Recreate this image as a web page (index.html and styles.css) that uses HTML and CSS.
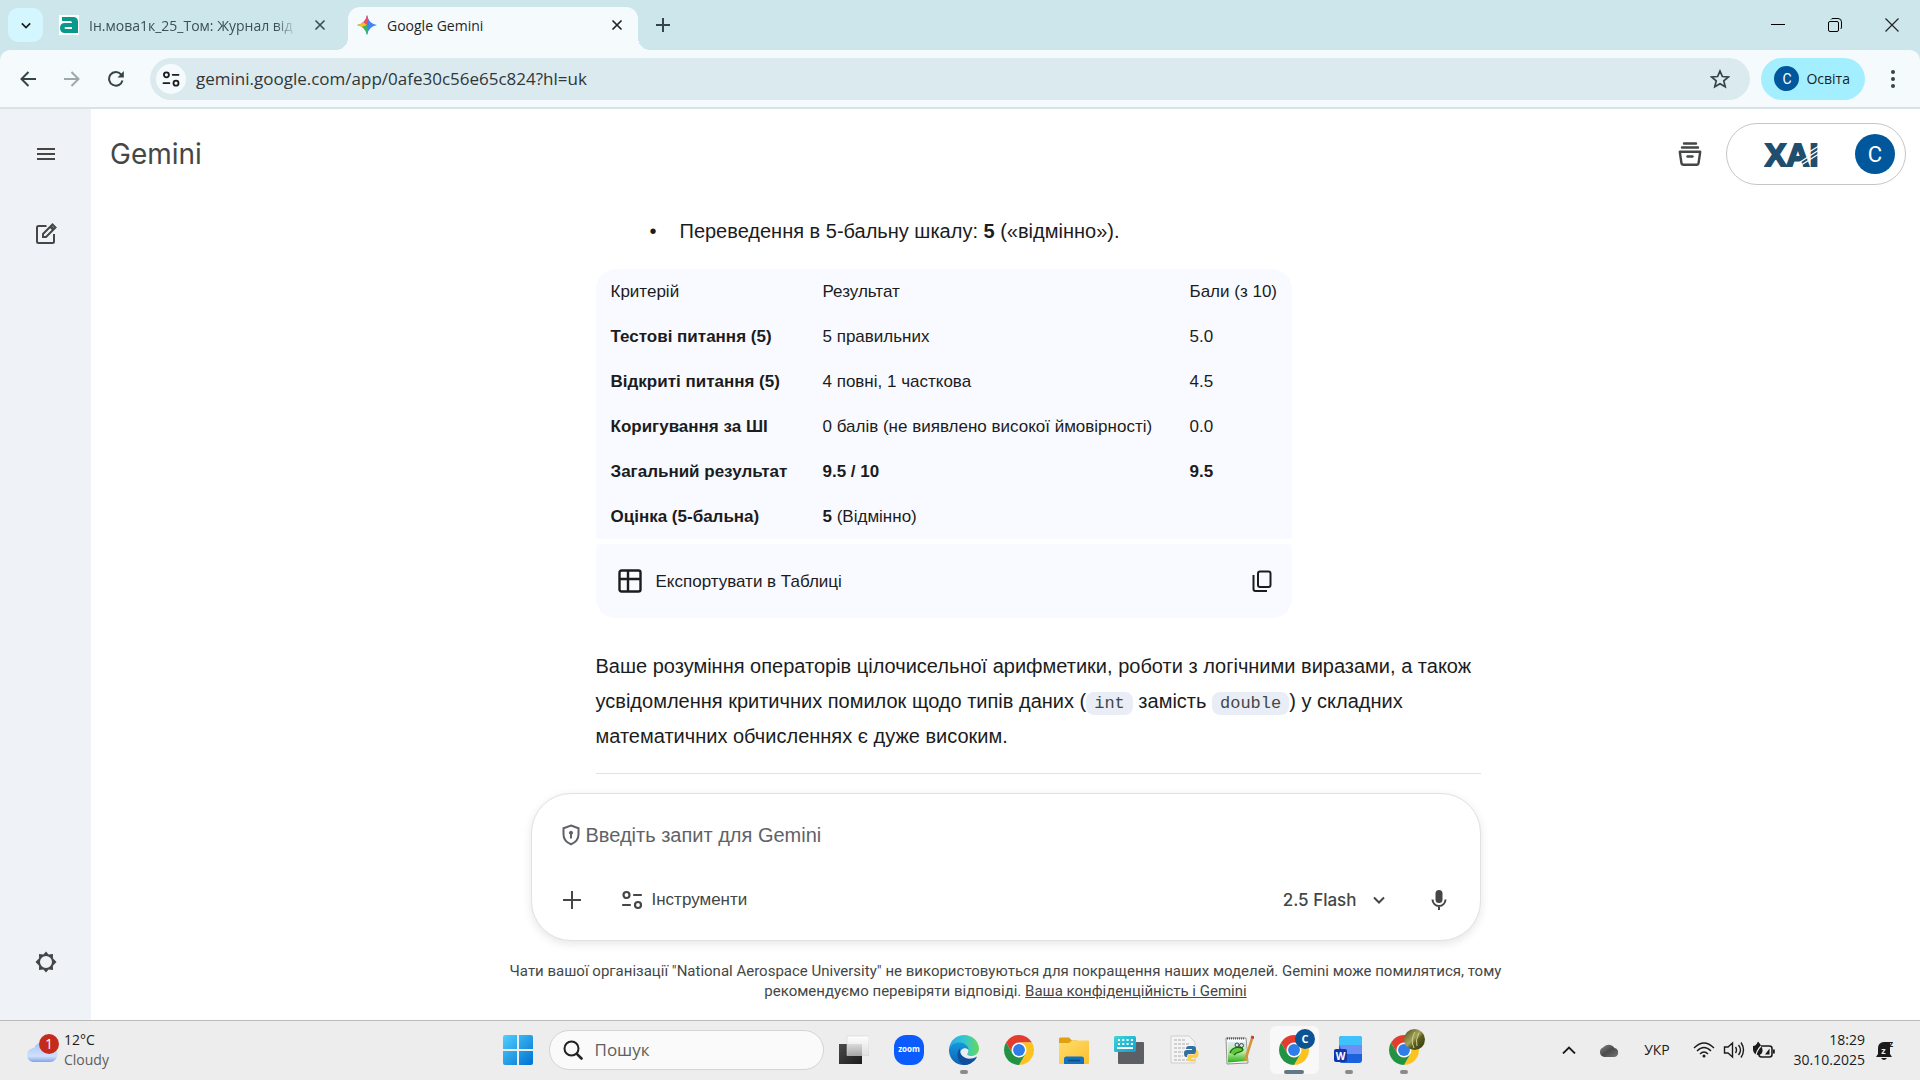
FILE: index.html
```
<!DOCTYPE html>
<html lang="uk">
<head>
<meta charset="utf-8">
<meta name="viewport" content="width=device-width, initial-scale=1">
<title>Google Gemini</title>
<link rel="stylesheet" href="styles.css">
</head>
<body>
<svg class="defs" aria-hidden="true">
  <defs>
    <linearGradient id="win" x1="0" y1="0" x2="1" y2="1"><stop offset="0" stop-color="#4fd0ff"/><stop offset="1" stop-color="#0070d0"/></linearGradient>
    <linearGradient id="folder" x1="0" y1="0" x2="1" y2="1"><stop offset="0" stop-color="#ffdc6b"/><stop offset="1" stop-color="#fbc02f"/></linearGradient>
    <linearGradient id="edgeTop" x1="0" y1="0" x2="1" y2="0"><stop offset="0" stop-color="#2aa8e8"/><stop offset=".5" stop-color="#33c6d2"/><stop offset="1" stop-color="#66d95a"/></linearGradient>
    <linearGradient id="edgeMid" x1="0" y1="0" x2="0" y2="1"><stop offset="0" stop-color="#1798dc"/><stop offset="1" stop-color="#0b62b8"/></linearGradient>
    <linearGradient id="cloud" x1="0" y1="0" x2="0" y2="1"><stop offset="0" stop-color="#a9c4f4"/><stop offset=".7" stop-color="#cfe0fb"/><stop offset="1" stop-color="#7ea4e8"/></linearGradient>
    <linearGradient id="dark" x1="0" y1="0" x2="1" y2="1"><stop offset="0" stop-color="#4a4a4a"/><stop offset="1" stop-color="#1c1c1c"/></linearGradient>
    <linearGradient id="glass" x1="0" y1="0" x2="0" y2="1"><stop offset="0" stop-color="#fff"/><stop offset="1" stop-color="#ddd" stop-opacity=".7"/></linearGradient>
    <linearGradient id="keys" x1="0" y1="0" x2="1" y2="1"><stop offset="0" stop-color="#3fd6d6"/><stop offset="1" stop-color="#0f9fcf"/></linearGradient>
    <linearGradient id="photo" x1="0" y1="0" x2="1" y2="1"><stop offset="0" stop-color="#4b4c15"/><stop offset=".45" stop-color="#a3a45a"/><stop offset=".6" stop-color="#5b5e1c"/><stop offset="1" stop-color="#2f3210"/></linearGradient>
    <linearGradient id="onedrive" x1="0" y1="0" x2="1" y2="1"><stop offset="0" stop-color="#888"/><stop offset=".5" stop-color="#4a4a4a"/><stop offset="1" stop-color="#777"/></linearGradient>
    <linearGradient id="meadow" x1="0" y1="0" x2="0" y2="1"><stop offset="0" stop-color="#d8ecf6"/><stop offset=".5" stop-color="#bfe7a0"/><stop offset="1" stop-color="#22b014"/></linearGradient>
    <symbol id="chrome" viewBox="0 0 48 48">
      <circle cx="24" cy="24" r="12" fill="#fff"/>
      <path fill="#e33b2e" d="M24 12h20.78A24 24 0 0 0 3.22 12L13.61 30A12 12 0 0 1 24 12Z"/>
      <path fill="#fcc31e" d="M34.39 30 24 48A24 24 0 0 0 44.78 12H24A12 12 0 0 1 34.39 30Z"/>
      <path fill="#229342" d="M13.61 30 3.22 12A24 24 0 0 0 24 48L34.39 30A12 12 0 0 1 13.61 30Z"/>
      <circle cx="24" cy="24" r="9.5" fill="#2f7de9"/>
    </symbol>
    <symbol id="tune" viewBox="0 0 24 24">
      <g fill="none" stroke="currentColor" stroke-width="2.200" stroke-linecap="round"><circle cx="6.5" cy="7" r="3"/><path d="M14 7h7M3 17h7"/><circle cx="18" cy="17" r="3"/></g>
    </symbol>
    <symbol id="cross" viewBox="0 0 12 12"><path d="M1.500 1.500l9 9M10.500 1.500l-9 9" stroke="currentColor" stroke-width="1.700" fill="none"/></symbol>
    <symbol id="chev" viewBox="0 0 12 8"><path d="M1 1.500l5 5 5-5" stroke="currentColor" stroke-width="2" fill="none"/></symbol>
  </defs>
</svg>

<header class="browser">
  <div class="tabstrip">
    <button class="tab-search" aria-label="Пошук вкладок"><svg width="10" height="7"><use href="#chev"/></svg></button>
    <div class="tab">
      <svg width="20" height="20" viewBox="0 0 20 20" aria-hidden="true"><path fill="#fff" d="M0 0h20v20H0z"/><path fill="#07998a" d="M3 2h11q5 0 5 5v11H6q-5 0-5-5t5-5h7V7.500q0-1.500-2-1.500H3zM7 12q-1.500 0-1.500 1T7 14h6v-2z"/></svg>
      <span class="tab-title faded">Ін.мова1к_25_Том: Журнал від</span>
      <button class="tab-close" aria-label="Закрити вкладку"><svg width="12" height="12"><use href="#cross"/></svg></button>
    </div>
    <div class="tab active">
      <svg width="20" height="20" viewBox="0 0 20 20" aria-hidden="true"><defs><clipPath id="spark"><path d="M10 0q1.500 8.500 10 10-8.500 1.500-10 10Q8.500 11.500 0 10 8.500 8.500 10 0Z"/></clipPath></defs><g clip-path="url(#spark)"><path fill="#3f86f5" d="M0 0h20v20H0z"/><path fill="#ee4d5e" d="M4 0h9l-3 10-5-2z"/><path fill="#fbbf1c" d="M0 5l6 2 4 3-3 3-7-1z"/><path fill="#35b566" d="M5 12l5-2 2 10H6z"/></g></svg>
      <span class="tab-title">Google Gemini</span>
      <button class="tab-close" aria-label="Закрити вкладку"><svg width="12" height="12"><use href="#cross"/></svg></button>
    </div>
    <button class="new-tab" aria-label="Нова вкладка"><svg width="14" height="14" viewBox="0 0 14 14"><path d="M7 0v14M0 7h14" stroke="currentColor" stroke-width="2"/></svg></button>
    <div class="window-controls">
      <button aria-label="Згорнути"><svg width="14" height="14" viewBox="0 0 14 14"><path d="M0 6.500h14" stroke="#000"/></svg></button>
      <button aria-label="Відновити"><svg width="14" height="14" viewBox="0 0 14 14" fill="none" stroke="#000"><rect x=".5" y="3.500" width="10" height="10" rx="1.500"/><path d="M3 1.500Q3.500.5 5 .5h5q3.500 0 3.500 3.500v5q0 1.500-1 2"/></svg></button>
      <button aria-label="Закрити"><svg width="14" height="14" viewBox="0 0 14 14"><path d="M.5.5l13 13M13.500.5l-13 13" stroke="#222" stroke-width="1.200"/></svg></button>
    </div>
  </div>
  <div class="toolbar">
    <nav class="history">
      <button aria-label="Назад"><svg width="16" height="16" viewBox="0 0 16 16"><path d="M16 8H2M8.500 1 1.500 8l7 7" fill="none" stroke="#344549" stroke-width="2"/></svg></button>
      <button aria-label="Вперед" disabled><svg width="16" height="16" viewBox="0 0 16 16"><path d="M0 8h14M7.500 1l7 7-7 7" fill="none" stroke="#9da8ab" stroke-width="2"/></svg></button>
      <button aria-label="Оновити"><svg width="16" height="16" viewBox="0 0 16 16"><path d="M14.500 9.500A6.800 6.800 0 1 1 13 3.300L15 5.500" fill="none" stroke="#344549" stroke-width="2"/><path d="M15.800 0v6.500H9.500z" fill="#344549"/></svg></button>
    </nav>
    <div class="omnibox">
      <button class="site-info" aria-label="Відомості про сайт"><svg width="20" height="20"><use href="#tune"/></svg></button>
      <input class="url" type="text" aria-label="Адреса" value="gemini.google.com/app/0afe30c56e65c824?hl=uk">
      <button class="star" aria-label="Додати закладку"><svg width="20" height="20" viewBox="0 0 20 20"><path d="M10 2l2.400 5.500 6 .5-4.600 3.900 1.400 5.900L10 14.700l-5.200 3.100 1.400-5.900L1.600 8l6-.5z" fill="none" stroke="#344549" stroke-width="1.700"/></svg></button>
    </div>
    <button class="profile"><span class="avatar small">C</span>Освіта</button>
    <button class="menu" aria-label="Меню"><svg width="4" height="18" viewBox="0 0 4 18" fill="#344549"><circle cx="2" cy="2" r="2"/><circle cx="2" cy="9" r="2"/><circle cx="2" cy="16" r="2"/></svg></button>
  </div>
</header>

<div class="app">
  <aside class="sidebar">
    <button aria-label="Головне меню"><svg width="18" height="14" viewBox="0 0 18 14"><path d="M0 2h18M0 7h18M0 12h18" stroke="#444746" stroke-width="2"/></svg></button>
    <button aria-label="Новий чат"><svg width="22" height="22" viewBox="0 0 22 22" fill="none" stroke="#444746" stroke-width="2"><path d="M11.500 3H3.500Q2 3 2 4.500v14Q2 20 3.500 20h14q1.500 0 1.500-1.500V11"/><path d="M8 14v-3L17.500 1.500l3 3L11 14z"/><path d="M15.500 3.500l3 3" stroke-width="3"/></svg></button>
    <button class="settings" aria-label="Налаштування"><svg width="22" height="22" viewBox="0 0 22 22" fill="#444746"><path fill-rule="evenodd" d="M11 .5l2.600 3 4.400-.5-.1 4.300 3.600 3.700-3.600 3.700.1 4.300-4.400-.5-2.600 3-2.600-3-4.400.5.100-4.300L.5 11l3.600-3.700L4 3l4.400.5zM11 5a6 6 0 1 0 0 12 6 6 0 1 0 0-12z"/></svg></button>
  </aside>

  <main class="content">
    <header class="top">
      <h1>Gemini</h1>
      <button class="archive" aria-label="Архів"><svg width="24" height="24" viewBox="0 0 24 24" fill="none" stroke="#444746" stroke-width="2.400" stroke-linecap="round"><path d="M6 1.500h12M4 5.500h16"/><path d="M1.800 9.800h20.400l-1.600 11q-.3 2-2 2H5.400q-1.700 0-2-2z" stroke-linejoin="round"/><path d="M9.500 14.500h5"/></svg></button>
      <button class="account" aria-label="Обліковий запис">
        <svg class="org" width="60" height="30" viewBox="0 0 60 30"><text x="1" y="27">XAI</text><path d="M30 27 58 9M34 28 58 13M42 15 58 5" stroke="#fff" stroke-width="1.300"/></svg>
        <span class="avatar">C</span>
      </button>
    </header>

    <section class="chat">
      <ul class="points"><li>Переведення в 5-бальну шкалу: <b>5</b> («відмінно»).</li></ul>
      <div class="table-card">
        <table>
          <thead><tr><th scope="col">Критерій</th><th scope="col">Результат</th><th scope="col">Бали (з 10)</th></tr></thead>
          <tbody>
            <tr><td><b>Тестові питання (5)</b></td><td>5 правильних</td><td>5.0</td></tr>
            <tr><td><b>Відкриті питання (5)</b></td><td>4 повні, 1 часткова</td><td>4.5</td></tr>
            <tr><td><b>Коригування за ШІ</b></td><td>0 балів (не виявлено високої ймовірності)</td><td>0.0</td></tr>
            <tr><td><b>Загальний результат</b></td><td><b>9.5 / 10</b></td><td><b>9.5</b></td></tr>
            <tr><td><b>Оцінка (5-бальна)</b></td><td><b>5</b> (Відмінно)</td><td></td></tr>
          </tbody>
        </table>
        <div class="table-footer">
          <button class="export"><svg width="24" height="24" viewBox="0 0 24 24" fill="none" stroke="#1b1c1d" stroke-width="2.400"><rect x="1.500" y="1.500" width="21" height="21" rx="2"/><path d="M1.500 10h21M10 1.500v21"/></svg>Експортувати в Таблиці</button>
          <button class="copy" aria-label="Копіювати"><svg width="20" height="22" viewBox="0 0 20 22" fill="none" stroke="#1b1c1d" stroke-width="2"><rect x="6" y="1.500" width="12.500" height="15.500" rx="2"/><path d="M1.500 5v14q0 2 2 2H15"/></svg></button>
        </div>
      </div>
      <p>Ваше розуміння операторів цілочисельної арифметики, роботи з логічними виразами, а також<br>усвідомлення критичних помилок щодо типів даних (<code>int</code> замість <code>double</code>) у складних<br>математичних обчисленнях є дуже високим.</p>
      <hr>
    </section>

    <form class="prompt">
      <div class="prompt-text">
        <svg width="20" height="22" viewBox="0 0 20 22" fill="none" stroke="#5f6368" stroke-width="2"><path d="M10 1.500l7.500 2.800v6q0 7-7.500 10-7.500-3-7.500-10v-6z"/><circle cx="10" cy="8.800" r="1.600" fill="#5f6368" stroke-width="1"/><path d="M10 9v5.500"/></svg>
        <input type="text" aria-label="Запит" placeholder="Введіть запит для Gemini">
      </div>
      <div class="prompt-tools">
        <button type="button" class="round" aria-label="Додати файли"><svg width="18" height="18" viewBox="0 0 18 18"><path d="M9 0v18M0 9h18" stroke="#444746" stroke-width="2"/></svg></button>
        <button type="button" class="tools"><svg width="24" height="24"><use href="#tune"/></svg>Інструменти</button>
        <button type="button" class="model">2.5 Flash<svg width="12" height="8"><use href="#chev"/></svg></button>
        <button type="button" class="round" aria-label="Мікрофон"><svg width="16" height="20" viewBox="0 0 16 20"><rect x="4.500" y="0" width="7" height="13" rx="3.500" fill="#444746"/><path d="M1.500 9.500a6.500 6.500 0 0 0 13 0M8 16v4" fill="none" stroke="#444746" stroke-width="2"/></svg></button>
      </div>
    </form>
    <p class="disclaimer">Чати вашої організації "National Aerospace University" не використовуються для покращення наших моделей. Gemini може помилятися, тому<br>рекомендуємо перевіряти відповіді. <a href="#">Ваша конфіденційність і Gemini</a></p>
  </main>
</div>

<footer class="taskbar">
  <button class="weather">
    <svg width="34" height="32" viewBox="0 0 34 32"><path d="M8 28a7 7 0 0 1-1-13.600 3 3 0 0 1 2-.4A9 9 0 0 1 25 13a7.500 7.500 0 0 1 0 15z" fill="url(#cloud)"/><circle cx="24" cy="10" r="10" fill="#c42b1c"/><text x="24" y="15">1</text></svg>
    <span class="weather-text"><span>12°C</span><span class="muted">Cloudy</span></span>
  </button>
  <nav class="apps">
    <button class="task" aria-label="Пуск"><svg width="30" height="30" viewBox="0 0 30 30"><path fill="url(#win)" d="M2 0h12v14H0V2q0-2 2-2zM16 0h12q2 0 2 2v12H16zM0 16h14v14H2q-2 0-2-2zM16 16h14v12q0 2-2 2H16z"/></svg></button>
    <label class="search"><svg width="20" height="20" viewBox="0 0 20 20" fill="none" stroke="#222" stroke-linecap="round"><circle cx="8.500" cy="8.500" r="7" stroke-width="2"/><path d="M13.800 13.800l4.700 4.700" stroke-width="2.600"/></svg><input type="text" placeholder="Пошук" aria-label="Пошук"></label>
    <button class="task" aria-label="Подання завдань"><svg width="30" height="30" viewBox="0 0 30 30"><path fill="url(#dark)" d="M0 9h23v20H0z"/><path fill="url(#glass)" stroke="#d5d5d5" stroke-width=".6" d="M8 1h22v19.500H8z"/></svg></button>
    <button class="task" aria-label="Zoom"><svg width="30" height="30" viewBox="0 0 30 30"><rect width="30" height="30" rx="12" fill="#0b5cff"/><text class="zoom-word" x="15" y="17">zoom</text></svg></button>
    <button class="task running" aria-label="Edge"><svg width="30" height="30" viewBox="0 0 30 30"><path fill="url(#edgeTop)" d="M0 14C1 5 8 0 15 0c9 0 15 7 15 13.500 0 5-4 7.500-7.500 7.500-3 0-5-1-4-2.500C21 15 18 9 11 9 6 9 2 11 0 14z"/><path fill="url(#edgeMid)" d="M0 14C2 9 7 7 11 7.500c5 .5 9 4 8.500 7.500-3-4-9-1-8.500 4 .5 6 6 10 12 8.500C20 29.500 17 30 15 30 6 30-.5 23 0 14z"/><path fill="#0f4f9e" d="M11 13.500c-1 9 9 13 17 8C26 27 20 30 15 30 9 28 6 18 11 13.500z"/></svg></button>
    <button class="task" aria-label="Chrome"><svg width="30" height="30"><use href="#chrome"/></svg></button>
    <button class="task" aria-label="Провідник"><svg width="30" height="30" viewBox="0 0 30 30"><path fill="#e0a010" d="M0 4q0-1.500 1.500-1.500H10l3 3h5V10H0z"/><path fill="url(#folder)" d="M0 8h10l3-2.500h16q1 0 1 1V28q0 1-1 1H1q-1 0-1-1z"/><path fill="#0f72c4" d="M5 29v-5q0-2.500 2.500-2.500h15Q25 21.500 25 24v5z"/><path d="M9 25.500h12" stroke="#0a4a86" stroke-width="1.500"/></svg></button>
    <button class="task" aria-label="Екранна клавіатура"><svg width="30" height="30" viewBox="0 0 30 30"><rect x="4" y="7" width="26" height="22" rx="1" fill="#5c5f63"/><rect width="22" height="16" y="1" rx="1.500" fill="url(#keys)"/><path d="M4 5h15M4 9h15" stroke="#fff" stroke-width="2" stroke-dasharray="2 2.300"/><path d="M3 13h16" stroke="#fff" stroke-width="2"/></svg></button>
    <button class="task" aria-label="Python"><svg width="30" height="30" viewBox="0 0 30 30"><path fill="#f4f4f4" stroke="#cfcfcf" d="M2 1h18l6 6v21H2z"/><path d="M5 5h12M5 9h16M5 13h12M5 17h9M5 21h9M5 25h14" stroke="#c4c4c4" stroke-width="1.500" stroke-dasharray="3 1"/><path fill="#34709f" d="M20 11h4q3 0 3 3v3q0 2-2 2h-5q-2 0-2 3h-1q-2 0-2-4 0-3 3-3h5v-1h-6q0-3 3-3z"/><path fill="#fcd04c" d="M27 15q2.500 0 2.500 4t-3 4h-4v1h4q0 2.500-3 2.500h-2q-3 0-3-3v-2q0-2 2-2h4q2.500 0 2.500-4.500z"/></svg></button>
    <button class="task" aria-label="Notepad++"><svg width="30" height="30" viewBox="0 0 30 30"><path fill="#fafafa" stroke="#777" stroke-width=".8" d="M2 3h20l2 25-21 1z"/><path fill="url(#meadow)" d="M3.500 7h18.500l1 19-19 1.500z"/><path d="M3 3.500h18" stroke="#555" stroke-width="2" stroke-dasharray="1 1"/><path d="M6 18c2-7 12-7 13-3-2 3-6 1-9 5" fill="#5cc83a" stroke="#166b12" stroke-width="1.300"/><circle cx="13" cy="10" r="2" fill="none" stroke="#444"/><circle cx="17.500" cy="10.500" r="2" fill="none" stroke="#444"/><path d="M28.500 2 21 26" stroke="#d8933a" stroke-width="2.600"/><path d="M29 1l-.8 2.500" stroke="#c03c3c" stroke-width="3"/></svg></button>
    <button class="task running current" aria-label="Chrome, Освіта"><svg width="42" height="42" viewBox="-6 0 42 42"><svg x="0" y="6" width="30" height="30"><use href="#chrome"/></svg><circle cx="26" cy="10" r="10" fill="#0b5394"/><text class="badge-letter" x="26" y="14">C</text></svg></button>
    <button class="task running" aria-label="Word"><svg width="30" height="30" viewBox="0 0 30 30"><rect x="5" y="1" width="23" height="27" rx="3" fill="#1b62dd"/><path fill="#3fc1fb" d="M8 1h17q3 0 3 3v6H5V4q0-3 3-3z"/><path fill="#6d8ff5" d="M5 10h23v9H10z"/><rect y="14" width="13" height="13" rx="2" fill="#1236a8"/><text class="word-letter" x="6.500" y="24.500">W</text></svg></button>
    <button class="task running" aria-label="Chrome"><svg width="42" height="42" viewBox="-6 0 42 42"><svg x="0" y="6" width="30" height="30"><use href="#chrome"/></svg><circle cx="25.500" cy="10.500" r="10.500" fill="url(#photo)"/><path d="M26 3q-5 8-1 16M30 4q-4 7-2 13" stroke="#cfcf90" fill="none"/></svg></button>
  </nav>
  <div class="tray">
    <button class="tray-item" aria-label="Приховані піктограми"><svg width="14" height="8" viewBox="0 0 14 8"><path d="M1 7.500l6-6 6 6" stroke="#1b1b1b" stroke-width="1.800" fill="none"/></svg></button>
    <button class="tray-item" aria-label="OneDrive"><svg width="20" height="14" viewBox="0 0 20 14"><path fill="url(#onedrive)" d="M5 14a5 5 0 0 1-1-9.500A7 7 0 0 1 15.500 5 4.600 4.600 0 0 1 15.500 14z"/></svg></button>
    <button class="lang">УКР</button>
    <button class="status" aria-label="Мережа, звук, батарея">
      <svg width="22" height="16" viewBox="0 0 22 16" fill="none" stroke="#1b1b1b" stroke-width="1.400"><path d="M1 6Q11-4 21 6M4 9q7-7 14 0M7 12q4-4 8 0"/><circle cx="11" cy="14" r="1.500" fill="#1b1b1b" stroke="none"/></svg>
      <svg width="22" height="18" viewBox="0 0 22 18" fill="none" stroke="#1b1b1b" stroke-width="1.400"><path d="M1.500 6h3.500l4.500-4v14L5 12H1.500zM12.500 6q2 3 0 6M15.500 4q4 5 0 10M18 1.500q5 7.500 0 15"/></svg>
      <svg width="22" height="18" viewBox="0 0 22 18"><rect x="6" y="5" width="13" height="11" rx="2.500" fill="none" stroke="#1b1b1b" stroke-width="1.600"/><path d="M12 13.500l4.500-6v6zM20 8.500h1.800v4H20z" fill="#1b1b1b"/><path d="M0 5q3 0 5-4.500Q10 6 9.500 10 9 14 5 14-1 13 0 5z" fill="#1b1b1b"/><path d="M2.500 17Q3 10 8 5" stroke="#ededed" fill="none" stroke-width="1.200"/></svg>
    </button>
    <button class="clock"><span>18:29</span><span>30.10.2025</span></button>
    <button class="tray-item" aria-label="Сповіщення"><svg width="28" height="28" viewBox="-4 -4 28 28"><path fill="#1b1b1b" d="M3 9a6 6 0 0 1 6-7h6v12l2 3H1l2-3zM6 18h6q-3 4-6 0z"/><text class="zz" x="8.500" y="13.500">z</text><text class="zz dark" x="16" y="7">z</text></svg></button>
  </div>
</footer>
</body>
</html>
```
FILE: styles.css
```
* { box-sizing: border-box; }
body {
  margin: 0;
  min-height: 100vh;
  display: flex;
  flex-direction: column;
  font-family: "Open Sans", "Noto Sans", sans-serif;
  font-size: 14px;
  color: #1b1c1d;
  background: #fff;
}
button, input { font: inherit; color: inherit; background: none; border: 0; margin: 0; padding: 0; }
input { outline: 0; min-width: 0; }
button { display: flex; align-items: center; justify-content: center; }
svg { display: block; flex: none; }
.defs { position: absolute; width: 0; height: 0; }

/* Browser frame */
.browser { background: #cde6eb; }
.tabstrip { display: flex; align-items: flex-end; height: 50px; padding-left: 8px; }
.tab-search { width: 35px; height: 34px; margin-bottom: 8px; border-radius: 10px; background: #d3f6ff; }
.tab { position: relative; display: flex; align-items: center; width: 290px; height: 43px; padding: 0 12px 7px 9px; gap: 10px; color: #3c5055; }
.tab:first-of-type { width: 298px; margin-left: 7px; padding-right: 19px; }
.tab-title { flex: 1; overflow: hidden; white-space: nowrap; }
.faded { -webkit-mask-image: linear-gradient(90deg, #000 88%, transparent 98%); mask-image: linear-gradient(90deg, #000 88%, transparent 98%); }
.tab-close { width: 18px; height: 18px; }
.tab.active { background: #f5fafd; border-radius: 12px 12px 0 0; color: #1f2628; }
.tab.active::before, .tab.active::after { content: ""; position: absolute; bottom: 0; width: 12px; height: 12px; }
.tab.active::before { right: 100%; background: radial-gradient(circle at 0 0, transparent 12px, #f5fafd 12px); }
.tab.active::after { left: 100%; background: radial-gradient(circle at 100% 0, transparent 12px, #f5fafd 12px); }
.new-tab { width: 34px; height: 34px; margin: 0 0 8px 8px; color: #344549; }
.window-controls { display: flex; margin-left: auto; align-self: stretch; }
.window-controls button { width: 57px; }
.toolbar { display: flex; align-items: center; height: 59px; padding: 0 9px 0 10px; background: #f5fafd; border-bottom: 2px solid #d9e3e6; border-radius: 10px 10px 0 0; }
.history { display: flex; gap: 8px; margin-right: 16px; }
.history button, .menu { width: 36px; height: 36px; }
.omnibox { flex: 1; display: flex; align-items: center; height: 42px; padding: 0 20px 0 6px; border-radius: 21px; background: #dbeaef; }
.site-info { width: 30px; height: 30px; border-radius: 50%; background: #f5fafd; }
.url { flex: 1; margin-left: 10px; font-size: 17px; color: #2f3739; }
.profile { height: 42px; margin: 0 10px 0 11px; padding: 0 15px 0 13px; gap: 7px; border-radius: 21px; background: #a3eeff; }
.avatar { display: grid; place-items: center; width: 40px; height: 40px; border-radius: 50%; background: #01579b; color: #fff; font-family: Roboto, sans-serif; font-size: 22px; }
.avatar.small { width: 25px; height: 25px; font-size: 14px; }

/* Application */
.app { flex: 1; display: flex; }
.sidebar { display: flex; flex-direction: column; align-items: center; gap: 30px; width: 91px; padding: 20px 0 33px; background: #eff3f8; }
.sidebar button { width: 50px; height: 50px; }
.sidebar .settings { margin-top: auto; }
.content { flex: 1; display: flex; flex-direction: column; align-items: center; min-width: 0; font-family: "Liberation Sans", Arial, sans-serif; }
.top { display: flex; align-items: center; align-self: stretch; height: 90px; padding: 0 14px 0 19px; }
h1 { margin: 0; font: 400 28px Inter, sans-serif; color: #444746; }
.archive { width: 50px; height: 50px; margin: 0 11px 0 auto; }
.account { width: 180px; height: 62px; padding: 0 10px 0 37px; justify-content: space-between; border: 1px solid #c4c7c5; border-radius: 31px; }
.org text { font: 700 32px "Liberation Sans", Arial, sans-serif; fill: #1f4e6e; stroke: #1f4e6e; stroke-width: 2px; }

.chat { width: min(950px, 100%); padding-left: 65px; flex: 1; font-size: 20px; line-height: 35px; }
.points { margin: 15px 0 20px; padding-left: 54px; list-style: none; }
.points li::before { content: "•"; display: inline-block; width: 30px; }
.table-card { display: inline-block; font-size: 17px; }
table { width: 100%; border-collapse: collapse; background: #f9faff; border-radius: 20px 20px 0 0; }
th, td { height: 45px; padding: 0 15px; font-weight: 400; text-align: left; line-height: 25px; white-space: nowrap; }
td:nth-child(2), th:nth-child(2) { width: 367px; }
td:first-child, th:first-child { width: 212px; }
.table-footer { display: flex; align-items: center; justify-content: space-between; height: 74px; margin-top: 5px; padding: 0 20px 0 22px; background: #f9faff; border-radius: 4px 4px 20px 20px; }
.export { gap: 14px; }
.chat p { margin: 31px 0 19px; }
code { padding: 2px 8px; border-radius: 8px; background: #e9eef6; color: #444746; font: 17px "Liberation Mono", monospace; }
hr { margin: 0; border: 0; border-top: 1px solid #e0e2e3; }

.prompt { display: flex; flex-direction: column; width: min(950px, 100%); margin-top: 19px; padding: 26px 17px 16px 16px; gap: 26px; border: 1px solid #dfe1e4; border-radius: 40px; background: #fff; box-shadow: 0 3px 10px #0000001a; }
.prompt-text { display: flex; align-items: center; gap: 5px; padding-left: 13px; }
.prompt-text input { flex: 1; font-size: 20px; line-height: 30px; height: 30px; }
.prompt-text input::placeholder { color: #5f6368; opacity: 1; }
.prompt-tools { display: flex; align-items: center; font-size: 17px; color: #444746; }
.round { width: 48px; height: 48px; }
.tools { gap: 8px; margin: 0 auto 0 12px; padding: 0 12px; height: 48px; }
.model { gap: 16px; margin-right: 16px; padding: 0 14px; height: 48px; font: 500 17px Inter, sans-serif; }
.disclaimer { margin: 20px 0 19px; font: 15px/20px Roboto, sans-serif; color: #444746; text-align: center; }
.disclaimer a { color: inherit; }

/* Taskbar */
.taskbar { display: grid; grid-template-columns: 1fr auto 1fr; height: 60px; padding-bottom: 2px; background: #ededed; border-top: 1px solid #bababa; color: #1b1b1b; }
.weather { justify-self: start; gap: 5px; padding-left: 25px; }
.weather text { font-size: 14px; fill: #fff; text-anchor: middle; }
.weather-text, .clock { display: flex; flex-direction: column; align-items: flex-start; line-height: 20px; }
.muted { color: #5d5d5d; }
.apps { display: flex; align-items: center; padding-left: 2px; }
.task { position: relative; width: 55px; height: 48px; }
.search { display: flex; align-items: center; gap: 12px; width: 275px; height: 40px; margin: 0 3px; padding: 0 13px; border: 1px solid #d4d4d4; border-radius: 20px; background: #fafafa; }
.search input { flex: 1; font-size: 17px; }
.search input::placeholder { color: #606060; opacity: 1; }
.running::after { content: ""; position: absolute; bottom: 0; left: 50%; width: 8px; height: 4px; margin-left: -4px; border-radius: 2px; background: #8a8a8a; }
.current { width: 49px; margin: 0 3px; border-radius: 6px; background: #f8f8f8; }
.current::after { width: 20px; margin-left: -10px; background: #627985; }
.task svg text { fill: #fff; text-anchor: middle; font-weight: 700; }
.task .zoom-word { font-size: 8px; }
.task .badge-letter { font-size: 11px; }
.task .word-letter { font-size: 10px; }
.tray { display: flex; justify-self: end; padding-right: 15px; }
.tray-item { width: 40px; }
.lang { width: 56px; }
.status { gap: 8px; width: 98px; }
.clock { align-items: flex-end; width: 82px; }
.zz { font: 700 9px "Open Sans", sans-serif; fill: #ededed; text-anchor: middle; }
.zz.dark { fill: #1b1b1b; }
```
